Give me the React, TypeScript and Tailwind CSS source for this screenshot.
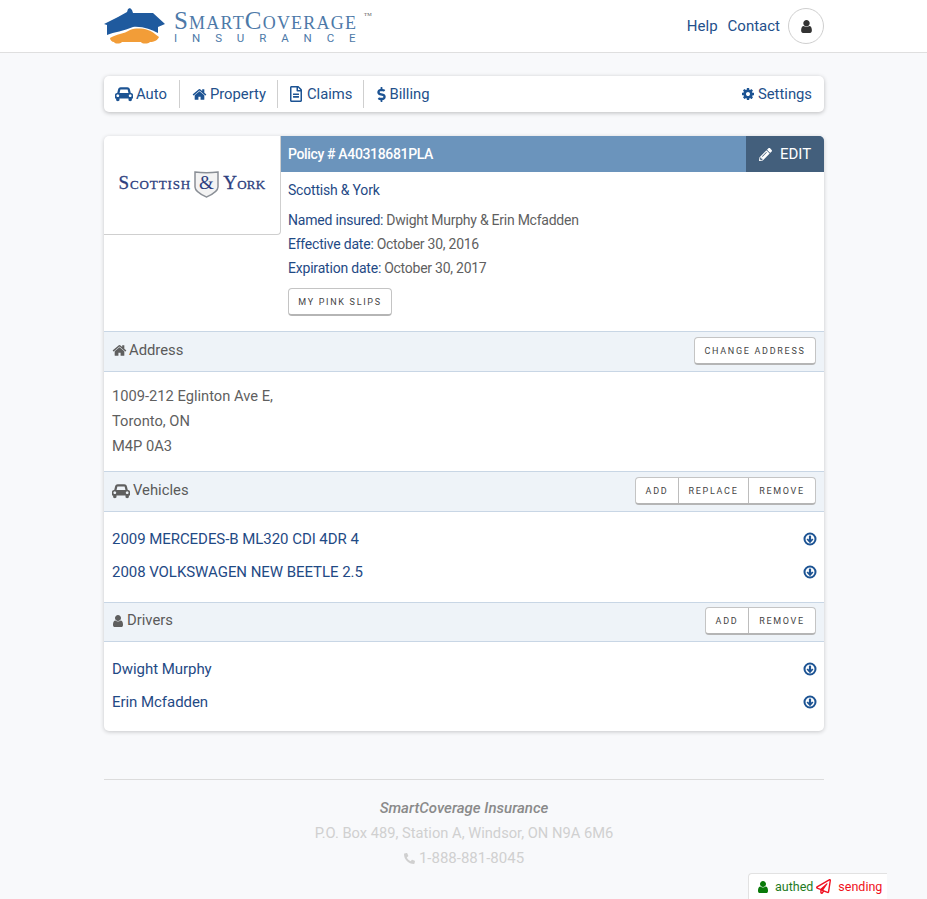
import { FaDollarSign, FaPencilAlt, FaRegFileAlt, FaPhone, FaRegPaperPlane } from "react-icons/fa";

function CarIcon({ className }: { className?: string }) {
  return (
    <svg width="18" height="16" viewBox="0 0 2048 1792" fill="currentColor" className={className}>
      <path d="M480 1088q0-66-47-113t-113-47-113 47-47 113 47 113 113 47 113-47 47-113zm36-320h1016l-89-357q-2-8-14-17.500t-21-9.500h-768q-9 0-21 9.500t-14 17.500zm1372 320q0-66-47-113t-113-47-113 47-47 113 47 113 113 47 113-47 47-113zm160-96v384q0 14-9 23t-23 9h-96v128q0 80-56 136t-136 56-136-56-56-136v-128h-1024v128q0 80-56 136t-136 56-136-56-56-136v-128h-96q-14 0-23-9t-9-23v-384q0-93 65.500-158.500t158.500-65.500h28l105-419q23-94 104-157.500t179-63.500h768q98 0 179 63.500t104 157.500l105 419h28q93 0 158.500 65.500t65.500 158.500z" />
    </svg>
  );
}

function HomeIcon({ className }: { className?: string }) {
  return (
    <svg width="15" height="15" viewBox="0 0 1792 1792" fill="currentColor" className={className}>
      <path d="M1472 992v480q0 26-19 45t-45 19h-384v-384h-256v384h-384q-26 0-45-19t-19-45v-480q0-1 .5-3t.5-3l575-474 575 474q1 2 1 6zm223-69l-62 74q-8 9-21 11h-3q-13 0-21-7l-692-577-692 577q-12 8-24 7-13-2-21-11l-62-74q-8-10-7-23.500t11-21.500l719-599q32-26 76-26t76 26l244 204v-195q0-14 9-23t23-9h192q14 0 23 9t9 23v408l219 182q10 8 11 21.500t-7 23.500z" />
    </svg>
  );
}

function UserIcon({ size = 14, className }: { size?: number; className?: string }) {
  return (
    <svg width={size} height={size} viewBox="0 0 1792 1792" fill="currentColor" className={className}>
      <path d="M1536 1399q0 109-62.500 187t-150.500 78h-854q-88 0-150.500-78t-62.500-187q0-85 8.500-160.500t31.500-151.500 58.500-130.500 94-88.500 134.500-34q131 128 313 128t313-128q76 0 134.500 34t94 88.500 58.500 130.500 31.500 151.500 8.500 160.500zm-256-887q0 159-112.500 271.500t-271.500 112.500-271.500-112.500-112.500-271.500 112.500-271.500 271.500-112.500 271.500 112.500 112.500 271.500z" />
    </svg>
  );
}

function CogIcon() {
  return (
    <svg width="14" height="14" viewBox="0 0 1792 1792" fill="currentColor">
      <path d="M1152 896q0-106-75-181t-181-75-181 75-75 181 75 181 181 75 181-75 75-181zm512-109v222q0 12-8 23t-20 13l-185 28q-19 54-39 91 35 50 107 138 10 12 10 25t-9 23q-27 37-99 108t-94 71q-12 0-26-9l-138-108q-44 23-91 38-16 136-29 186-7 28-36 28h-222q-14 0-24.500-8.500t-11.500-21.500l-28-184q-49-16-90-37l-141 107q-10 9-25 9-14 0-25-11-126-114-165-168-7-10-7-23 0-12 8-23 15-21 51-66.500t54-70.500q-27-50-41-99l-183-27q-13-2-21-12.500t-8-23.500v-222q0-12 8-23t19-13l186-28q14-46 39-92-40-57-107-138-10-12-10-24 0-10 9-23 26-36 98.500-107.500t94.500-71.500q13 0 26 10l138 107q44-23 91-38 16-136 29-186 7-28 36-28h222q14 0 24.500 8.500t11.500 21.500l28 184q49 16 90 37l142-107q9-9 24-9 13 0 25 10 129 119 165 170 7 8 7 22 0 12-8 23-15 21-51 66.500t-54 70.500q26 50 41 98l183 28q13 2 21 12.500t8 23.500z" />
    </svg>
  );
}

function DownIcon() {
  return (
    <svg width="14" height="14" viewBox="0 0 14 14" fill="none" stroke="#1c5393" className="mb-[1px] -mr-[1px]">
      <circle cx="7" cy="7" r="5.5" strokeWidth="2" />
      <path d="M7 3.6V9.4" strokeWidth="2.2" />
      <path d="M4.2 7L7 10L9.800 7" strokeWidth="1.8" />
    </svg>
  );
}

function Logo() {
  return (
    <div className="flex items-center h-[52px]">
      <svg width="62" height="36" viewBox="0 0 62 36" className="mr-[8px]">
        <path d="M0 16 L14 9 L23 4 L24 1 L26 0 L28 2 L29 5 L49 5 L61 16 L54 19 L54 25 C48 22 38 18 29 19 C20 23 10 24 3 27 L3 17 Z" fill="#1f5a9e" />
        <path d="M6 30 C12 26 20 26 26 22 C34 19 46 21 51 26 L55 29 C54 32 50 34 46 34 C44 36 38 36 37 34 L18 34 C16 36 11 36 10 34 C8 34 6 32 6 30 Z" fill="#f29d38" />
      </svg>
      <div className="flex flex-col pt-[1px]">
        <div className="flex items-start font-['Liberation_Serif',serif] text-[#4d79a8] leading-none h-[25px]">
          <span className="text-[25px] tracking-[1.2px] [font-variant:small-caps]">SmartCoverage</span>
          <span className="text-[5px] ml-[7px] mt-[4px] text-[#555]">TM</span>
        </div>
        <div className="text-[#4d79a8] text-[11.500px] h-[12px] leading-none tracking-[14.900px]">INSURANCE</div>
      </div>
    </div>
  );
}

function Tab({ icon, label, pad, gap = "gap-[3px]", border = true }: { icon: React.ReactNode; label: string; pad: string; gap?: string; border?: boolean }) {
  return (
    <div className={`flex items-center ${gap} ${pad} h-[28px] ${border ? "border-r border-[#cfcfcf]" : ""}`}>
      <span className="text-[#1c5393]">{icon}</span>
      <span className="text-[14.800px] text-[#23508b]">{label}</span>
    </div>
  );
}

function Btn({ label, w }: { label: string; w: string }) {
  return <div className={`${w} h-full pt-[2px] flex items-center justify-center text-[9px] tracking-[1.7px] text-[#444] border-r border-[#bdbdbd] last:border-r-0`}>{label}</div>;
}

function BtnGroup({ children }: { children: React.ReactNode }) {
  return <div className="flex h-[28px] bg-white border border-[#c4c4c4] border-b-2 border-b-[#b5b5b5] rounded-[4px]">{children}</div>;
}

function SectionHead({ icon, label, box = "h-[41px] pb-[1px]", gap = "gap-[2px]", children }: { icon: React.ReactNode; label: string; box?: string; gap?: string; children: React.ReactNode }) {
  return (
    <div className={`${box} flex items-center justify-between px-[8px] bg-[#eef3f8] border-y border-[#c8d6e5]`}>
      <div className={`flex items-center ${gap} pb-[1px] text-[#5a5a5a] text-[14.800px]`}>
        <span className="text-[#5f5f5f]">{icon}</span>
        {label}
      </div>
      {children}
    </div>
  );
}

function Row({ label }: { label: string }) {
  return (
    <div className="h-[33px] flex items-center justify-between px-[8px]">
      <span className="text-[15px] tracking-[-0.05px] text-[#1f4a85] font-[450]">{label}</span>
      <DownIcon />
    </div>
  );
}

function Info({ k, v }: { k: string; v: string }) {
  return (
    <div className="h-[24px] flex items-center text-[14px]">
      <span className="text-[#1f4a85] tracking-[-0.2px]">{k}:</span>
      <span className="text-[#5f5f5f] ml-[3px] tracking-[-0.25px]">{v}</span>
    </div>
  );
}

export default function App() {
  return (
    <div className="relative h-[899px] overflow-hidden bg-[#f8f9fb] font-['Roboto',sans-serif]">
      <header className="h-[53px] bg-white border-b border-[#dfdfdf]">
        <div className="w-[720px] ml-[104px] h-full flex items-center justify-between">
          <Logo />
          <div className="flex items-center text-[15px] text-[#23508b]">
            <span>Help</span>
            <span className="ml-[10px]">Contact</span>
            <div className="ml-[8px] w-[36px] h-[36px] rounded-full border border-[#cfcfcf] flex items-center justify-center">
              <UserIcon size={15} className="text-[#333]" />
            </div>
          </div>
        </div>
      </header>

      <div className="w-[720px] ml-[104px] pt-[23px]">
        <nav className="h-[36px] bg-white rounded-[5px] shadow-[0_1px_4px_rgba(0,0,0,0.25)] flex items-center justify-between">
          <div className="flex items-center">
            <Tab icon={<CarIcon />} label="Auto" pad="pl-[11px] pr-[12px]" />
            <Tab icon={<HomeIcon />} label="Property" pad="pl-[12px] pr-[11px]" />
            <Tab icon={<FaRegFileAlt size={16} />} label="Claims" pad="pl-[10px] pr-[11px]" />
            <Tab icon={<FaDollarSign size={15} />} label="Billing" pad="pl-[10px]" gap="gap-0" border={false} />
          </div>
          <Tab icon={<CogIcon />} label="Settings" pad="pr-[12px]" border={false} />
        </nav>

        <section className="mt-[24px] h-[595px] bg-white rounded-[5px] shadow-[0_1px_4px_rgba(0,0,0,0.2)]">
          <div className="flex h-[195px]">
            <div className="w-[177px] h-[99px] flex items-center justify-center gap-[3px] border-r border-b border-[#cfcfcf] rounded-br-[4px] pb-[4px] font-['Liberation_Serif',serif] text-[#2d3f80] [-webkit-text-stroke:0.3px]">
              <span className="text-[19px] [font-variant:small-caps] tracking-[0.9px]">Scottish</span>
              <svg width="25" height="28" viewBox="0 0 25 28" className="mr-[1px] mt-[1px]">
                <path d="M1 2 C8 3 17 3 24 2 L24 17 C24 22 17 25 12.500 27 C8 25 1 22 1 17 Z" fill="#f3f3f3" stroke="#8a8f96" strokeWidth="1.5" />
                <text x="12.500" y="19" textAnchor="middle" fontSize="19" fill="#2d3f80" fontFamily="Liberation Serif">&amp;</text>
              </svg>
              <span className="text-[19px] [font-variant:small-caps] tracking-[0.3px]">York</span>
            </div>
            <div className="flex-1 min-w-0">
              <div className="h-[36px] flex bg-[#6b94bc] rounded-tr-[5px] overflow-hidden">
                <div className="flex-1 flex items-center pl-[7px] text-[14px] tracking-[-0.35px] font-medium text-white">Policy # A40318681PLA</div>
                <div className="w-[78px] bg-[#435f7c] flex items-center justify-center gap-[8px] text-white text-[15px]">
                  <FaPencilAlt size={13} />
                  EDIT
                </div>
              </div>
              <div className="pl-[7px]">
                <div className="h-[36px] flex items-center text-[14px] tracking-[-0.2px] text-[#1f4a85]">Scottish &amp; York</div>
                <Info k="Named insured" v="Dwight Murphy & Erin Mcfadden" />
                <Info k="Effective date" v="October 30, 2016" />
                <Info k="Expiration date" v="October 30, 2017" />
                <div className="mt-[8px] pt-[2px] w-[104px] h-[28px] flex items-center justify-center bg-white border border-[#c4c4c4] border-b-2 border-b-[#b5b5b5] rounded-[4px] text-[9px] tracking-[1.7px] text-[#444]">MY PINK SLIPS</div>
              </div>
            </div>
          </div>

          <SectionHead icon={<HomeIcon />} label="Address">
            <BtnGroup><Btn label="CHANGE ADDRESS" w="w-[120px]" /></BtnGroup>
          </SectionHead>
          <div className="h-[99px] pl-[8px] pt-[12px] text-[14.700px] leading-[25px] text-[#5f5f5f]">
            <div>1009-212 Eglinton Ave E,</div>
            <div>Toronto, ON</div>
            <div>M4P 0A3</div>
          </div>

          <SectionHead icon={<CarIcon />} label="Vehicles" gap="gap-[3px]">
            <BtnGroup>
              <Btn label="ADD" w="w-[43px]" />
              <Btn label="REPLACE" w="w-[70px]" />
              <Btn label="REMOVE" w="w-[66px]" />
            </BtnGroup>
          </SectionHead>
          <div className="h-[90px] pt-[11px]">
            <Row label="2009 MERCEDES-B ML320 CDI 4DR 4" />
            <Row label="2008 VOLKSWAGEN NEW BEETLE 2.5" />
          </div>

          <SectionHead icon={<UserIcon size={14} className="-ml-[1px]" />} label="Drivers" box="h-[40px] pb-[2px]">
            <BtnGroup>
              <Btn label="ADD" w="w-[43px]" />
              <Btn label="REMOVE" w="w-[66px]" />
            </BtnGroup>
          </SectionHead>
          <div className="pt-[11px]">
            <Row label="Dwight Murphy" />
            <Row label="Erin Mcfadden" />
          </div>
        </section>

        <footer className="mt-[48px] border-t border-[#dcdcdc] pt-[16px] text-center text-[15px] leading-[25px] text-[#d0d0d0]">
          <div className="italic font-medium text-[#8a8a8a]">SmartCoverage Insurance</div>
          <div className="text-[14.700px]">P.O. Box 489, Station A, Windsor, ON N9A 6M6</div>
          <div className="flex items-center justify-center gap-[4px]"><FaPhone size={11} className="-scale-x-100" />1-888-881-8045</div>
        </footer>
      </div>

      <div className="absolute left-[748px] top-[873px] w-[139px] h-[26px] bg-white border-l border-t border-[#e2e2e2] rounded-tl-[4px] flex items-center pl-[7px] text-[12.500px]">
        <UserIcon size={14} className="text-[#0a7a0a]" />
        <span className="ml-[5px] pt-[1px] text-[#1e7a1e]">authed</span>
        <FaRegPaperPlane size={15} className="ml-[3px] text-[#f01020]" />
        <span className="ml-[7px] pt-[1px] text-[#f01020]">sending</span>
      </div>
    </div>
  );
}
